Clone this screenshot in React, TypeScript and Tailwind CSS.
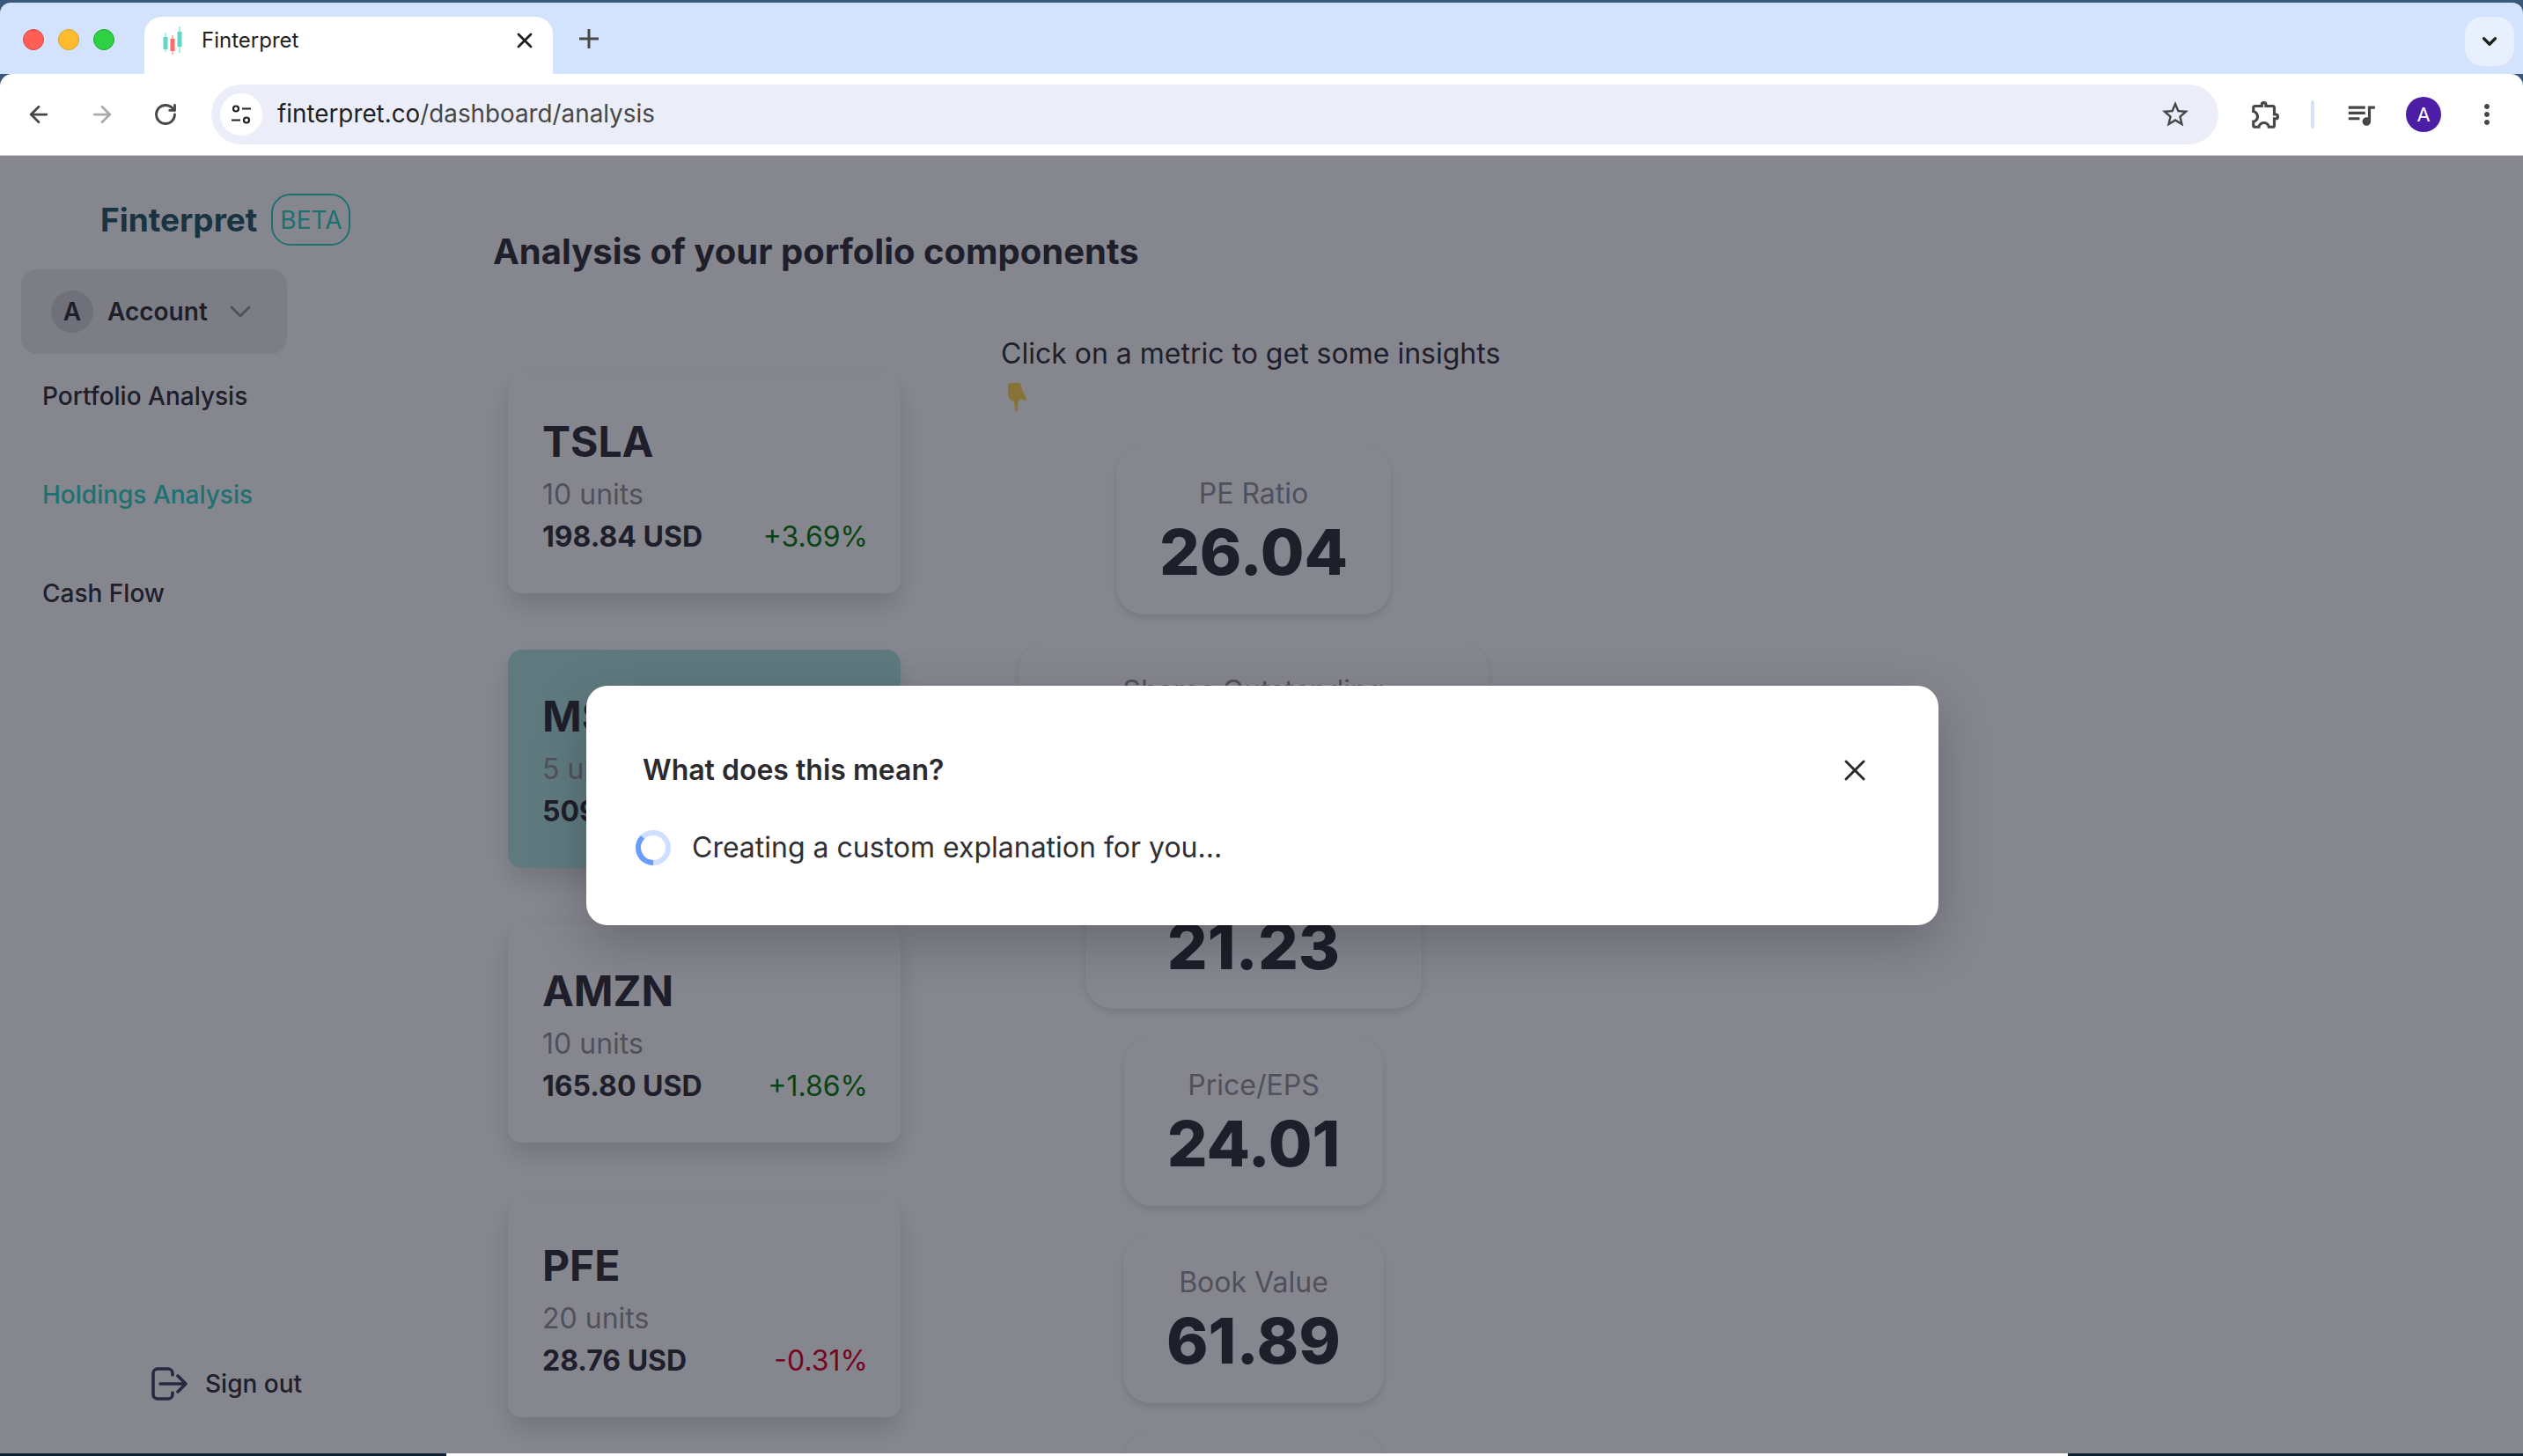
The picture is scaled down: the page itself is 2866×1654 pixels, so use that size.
import { ArrowLeft, ArrowRight, ChevronDown, RotateCw, X } from "lucide-react";
import { MdMoreVert, MdOutlineExtension, MdOutlineStarBorder, MdQueueMusic } from "react-icons/md";

const stocks = [
  { symbol: "TSLA", units: "10 units", price: "198.84 USD", change: "+3.69%", up: true },
  { symbol: "MSFT", units: "5 units", price: "509.90 USD", change: "+0.42%", up: true, active: true },
  { symbol: "AMZN", units: "10 units", price: "165.80 USD", change: "+1.86%", up: true },
  { symbol: "PFE", units: "20 units", price: "28.76 USD", change: "-0.31%", up: false },
];

const metrics = [
  { label: "PE Ratio", value: "26.04" },
  { label: "Shares Outstanding", value: "", width: "w-[534px]" },
  { label: "", value: "21.23", width: "w-[382px]" },
  { label: "Price/EPS", value: "24.01" },
  { label: "Book Value", value: "61.89" },
  { label: "", value: "", width: "w-[294px]" },
];

const Favicon = () => (
  <svg width="22" height="32" viewBox="0 0 22 32">
    <path d="M3 7v22M19 0v30" stroke="#5fd6c6" strokeWidth="1" />
    <path d="M11 10v22" stroke="#ff6b6b" strokeWidth="1" />
    <rect x="0.5" y="12" width="5" height="14" fill="#5fd6c6" />
    <rect x="8.5" y="14" width="5" height="14" fill="#ff6b6b" />
    <rect x="16.5" y="6" width="5" height="17" fill="#5fd6c6" />
  </svg>
);

const SiteIcon = () => (
  <svg width="24" height="24" viewBox="0 0 24 24" fill="none" stroke="#222" strokeWidth="2.2">
    <circle cx="6" cy="5.5" r="3" />
    <path d="M13 5.5h10M1 18.5h10" />
    <circle cx="18" cy="18.5" r="3" />
  </svg>
);

const SignOutIcon = () => (
  <svg width="42" height="38" viewBox="0 0 42 38" fill="none" stroke="#3f4763" strokeWidth="3.6" strokeLinecap="round" strokeLinejoin="round">
    <path d="M25 9V7a5 5 0 0 0-5-5H8a5 5 0 0 0-5 5v24a5 5 0 0 0 5 5h12a5 5 0 0 0 5-5v-2" />
    <path d="M11 19h28M31 10l9 9-9 9" />
  </svg>
);

// emoji drawn by hand, dimmed by the overlay like the rest of the page
const PointingHand = () => (
  <svg width="24" height="33" viewBox="0 0 24 33">
    <path
      d="M2 3Q2 0 6 0H14Q17 0 17 3L18 9Q22 13 23 20L20 20Q18 18 17 18Q15 20 13.5 21L13 32Q11 33.5 10 32L9 21Q4 20 2 14Z"
      fill="#ffd84a"
    />
  </svg>
);

const Spinner = () => (
  <svg width="40" height="40" viewBox="0 0 40 40" fill="none" strokeWidth="6">
    <circle cx="20" cy="20" r="17" stroke="#cfdfff" />
    <path d="M20 37A17 17 0 0 1 8 8" stroke="#6a9dfb" />
  </svg>
);

const StockCard = ({ stock }: { stock: (typeof stocks)[number] }) => (
  <div
    className={`h-[248px] w-[446px] shrink-0 rounded-2xl pt-[46px] pr-[37px] pl-[39px] shadow-[0_14px_28px_rgba(0,0,0,0.14)] ${
      stock.active ? "bg-[#b1e6df]" : "bg-white"
    }`}
  >
    <div className="text-[48px] leading-[60px] font-bold text-[#2f3137]">{stock.symbol}</div>
    <div className="mt-[11px] text-[32px] leading-[38px] text-[#939399]">{stock.units}</div>
    <div className="mt-[10px] flex items-center justify-between text-[32px] leading-[38px]">
      <span className="font-bold text-[#2f3137]">{stock.price}</span>
      <span className={stock.up ? "text-[#047a04]" : "text-[#d8001c]"}>{stock.change}</span>
    </div>
  </div>
);

const MetricCard = ({ metric }: { metric: (typeof metrics)[number] }) => (
  <div
    className={`flex h-[192px] shrink-0 flex-col items-center rounded-[32px] bg-white px-[49px] pt-9 shadow-[0_4px_10px_rgba(0,0,0,0.12)] ${metric.width ?? ""}`}
  >
    <div className="h-[38px] text-[32px] leading-[38px] whitespace-nowrap text-[#939399]">{metric.label}</div>
    <div className="mt-[11px] text-[72px] leading-[72px] font-extrabold text-[#2f3137]">{metric.value}</div>
  </div>
);

export default function App() {
  return (
    <div className="flex h-[1654px] w-[2866px] flex-col overflow-hidden bg-[#3a5878] font-['Inter',sans-serif]">
      <div className="mt-[3px] flex h-[81px] shrink-0 items-start rounded-t-xl bg-[#d3e3fd] pt-4">
        <div className="mt-[14px] ml-[26px] flex gap-4">
          <span className="h-6 w-6 rounded-full border border-[#e0443e] bg-[#ff5f57]" />
          <span className="h-6 w-6 rounded-full border border-[#dea123] bg-[#febc2e]" />
          <span className="h-6 w-6 rounded-full border border-[#1aab29] bg-[#2fd043]" />
        </div>
        <div className="ml-[34px] flex h-[68px] w-[464px] items-center rounded-t-[20px] bg-white pr-[18px] pb-[15px] pl-[21px]">
          <Favicon />
          <span className="ml-[22px] flex-1 text-[24px] text-[#1f1f1f]">Finterpret</span>
          <X size={28} strokeWidth={2.4} className="text-[#1f1f1f]" />
        </div>
        <svg width="26" height="26" viewBox="0 0 26 26" className="mt-3 ml-7" fill="none" stroke="#474747" strokeWidth="3">
          <path d="M13 2v22M2 13h22" />
        </svg>
        <div className="mr-[10px] ml-auto flex h-14 w-14 items-center justify-center rounded-[20px] bg-[#e9f0fd]">
          <ChevronDown size={26} strokeWidth={3} className="text-[#1f1f1f]" />
        </div>
      </div>

      <div className="flex h-[92px] shrink-0 items-center rounded-t-[14px] bg-white">
        <ArrowLeft size={30} strokeWidth={2.2} className="ml-[29px] text-[#474747]" />
        <ArrowRight size={30} strokeWidth={2.2} className="ml-[42px] text-[#ababab]" />
        <RotateCw size={28} strokeWidth={2.4} className="ml-[43px] text-[#474747]" />
        <div className="ml-[38px] flex h-[68px] w-[2280px] items-center rounded-full bg-[#ebeef8] pr-[31px] pl-[10px]">
          <span className="flex h-12 w-12 items-center justify-center rounded-full bg-white">
            <SiteIcon />
          </span>
          <span className="ml-[17px] flex-1 text-[27.8px] text-[#474747]">
            <span className="text-[#1f1f1f]">finterpret.co</span>/dashboard/analysis
          </span>
          <MdOutlineStarBorder size={36} className="text-[#474747]" />
        </div>
        <MdOutlineExtension size={38} className="ml-[35px] text-[#474747]" />
        <span className="ml-[32px] h-8 w-1 rounded bg-[#d3e3fd]" />
        <MdQueueMusic size={38} className="ml-[34px] text-[#474747]" />
        <span className="ml-[32px] flex h-10 w-10 items-center justify-center rounded-full bg-[#4c1ea6] text-[22px] text-white">A</span>
        <MdMoreVert size={36} className="ml-[34px] text-[#474747]" />
      </div>
      <div className="h-[1px] shrink-0 bg-[#d0d0d0]" />

      <div className="relative flex min-h-0 flex-1 overflow-hidden bg-white">
        <aside className="flex w-[560px] shrink-0 flex-col">
          <div className="mt-[43px] ml-[114px] flex items-center">
            <span className="text-[37px] leading-[46px] font-bold text-[#255b63]">Finterpret</span>
            <span className="ml-[16px] flex h-[59px] w-[90px] items-center justify-center rounded-[22px] border-2 border-[#2cd4c0] text-[28px] text-[#2cd4c0]">
              BETA
            </span>
          </div>
          <div className="mt-[27px] ml-[24px] flex h-[96px] w-[302px] items-center rounded-[18px] bg-[#ecedeb] pl-[34px]">
            <span className="flex h-12 w-12 items-center justify-center rounded-full bg-[#d3d3d5] text-[28px] font-semibold text-[#2f3137]">
              A
            </span>
            <span className="ml-4 text-[28px] font-semibold text-[#2f3137]">Account</span>
            <ChevronDown size={40} strokeWidth={1.6} className="ml-[17px] text-[#939399]" />
          </div>
          <nav className="mt-[30px] ml-12 flex flex-col gap-[76px] text-[28px] leading-9 font-medium text-[#2f3137]">
            <span>Portfolio Analysis</span>
            <span className="text-[#2cd4c0]">Holdings Analysis</span>
            <span>Cash Flow</span>
          </nav>
          <div className="mt-auto mb-[59px] ml-[171px] flex h-10 items-center gap-5">
            <SignOutIcon />
            <span className="text-[28px] font-medium text-[#2f3137]">Sign out</span>
          </div>
        </aside>

        <main className="min-w-0 flex-1">
          <h1 className="mt-[84px] text-[40px] leading-[50px] font-bold text-[#2f3137]">Analysis of your porfolio components</h1>
          <div className="ml-[17px] flex items-start">
            <div className="mt-[115px] flex w-[446px] flex-col gap-[64px]">
              {stocks.map((stock) => (
                <StockCard key={stock.symbol} stock={stock} />
              ))}
            </div>
            <div className="mt-[67px] ml-[114px] flex w-[574px] flex-col items-center">
              <div className="w-full text-[32px] leading-[48px] whitespace-nowrap text-[#2f3137]">Click on a metric to get some insights</div>
              <div className="mt-[9px] mb-[38px] w-full pl-[6px]">
                <PointingHand />
              </div>
              <div className="flex flex-col items-center gap-8">
                {metrics.map((metric, index) => (
                  <MetricCard key={index} metric={metric} />
                ))}
              </div>
            </div>
          </div>
        </main>

        <div className="absolute inset-0 flex items-center justify-center bg-[rgba(13,13,31,0.5)]">
          <div className="mt-[2px] ml-[2px] h-[272px] w-[1536px] rounded-3xl bg-white pt-[72px] pr-[75px] pl-[64px] shadow-[0_20px_60px_rgba(0,0,0,0.22)]">
            <div className="flex h-12 items-center justify-between">
              <span className="text-[32px] leading-12 font-semibold text-[#2b2b2f]">What does this mean?</span>
              <X size={40} strokeWidth={1.8} className="text-[#2b2b2f]" />
            </div>
            <div className="mt-[40px] -ml-[8px] flex items-center gap-[24px]">
              <Spinner />
              <span className="text-[32px] leading-12 text-[#2f2f33]">Creating a custom explanation for you...</span>
            </div>
          </div>
        </div>
      </div>

      <div className="flex h-[3px] shrink-0 bg-[#0f2233]">
        <div className="ml-[507px] w-[1842px] bg-white" />
      </div>
    </div>
  );
}
